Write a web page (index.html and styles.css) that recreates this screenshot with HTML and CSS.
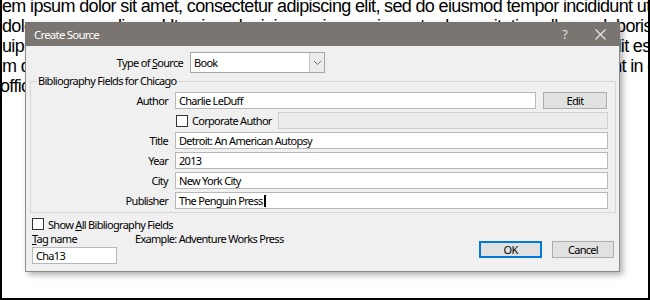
FILE: index.html
```html
<!DOCTYPE html>
<html lang="en">
    <head>
        <meta charset="UTF-8">
        <title>Create Source</title>
        <link rel="stylesheet" href="styles.css">
    </head>
    <body>
        <!-- the document behind the dialog -->
        <div class="doc">
            <div class="docLine">em ipsum dolor sit amet, consectetur adipiscing elit, sed do eiusmod tempor incididunt ut labore</div>
            <div class="docLine">dolore magna aliqua. Ut enim ad minim veniam, quis nostrud exercitation ullamco laboris</div>
            <div class="docLine">uip ex ea commodo consequat. Duis aute irure dolor in reprehenderit in voluptate velit esse</div>
            <div class="docLine">m dolore eu fugiat nulla pariatur. Excepteur sint occaecat cupidatat non proident, sunt in culpa</div>
            <div class="docLine lastLine">officia deserunt mollit anim id est laborum.</div>
        </div>

        <div class="dialog">
            <div class="titleBar">
                <span class="titleText">Create Source</span>
                <span class="titleButtons">
                    <span class="helpBtn">?</span>
                    <svg class="closeBtn" width="11" height="11" viewBox="0 0 11 11">
                        <path d="M0.5 0.5 L10.5 10.5 M10.5 0.5 L0.5 10.5" stroke="#ececec" stroke-width="1.1" fill="none"/>
                    </svg>
                </span>
            </div>
            <div class="dialogBody">
                <div class="typeRow">
                    <label class="typeLabel">Type of <u>S</u>ource</label>
                    <div class="selectBox">
                        <span class="selectValue">Book</span>
                        <span class="dropBtn">
                            <svg width="9" height="6" viewBox="0 0 9 6">
                                <path d="M1 1 L4.5 4.5 L8 1" stroke="#707070" stroke-width="1" fill="none"/>
                            </svg>
                        </span>
                    </div>
                </div>

                <fieldset class="group">
                    <legend>Bibliography Fields for Chicago</legend>
                    <div class="fieldGrid">
                        <span class="fieldLabel">Author</span>
                        <div class="authorCell">
                            <div class="textBox authorBox">Charlie LeDuff</div>
                            <div class="btn editBtn">Edit</div>
                        </div>

                        <span></span>
                        <div class="corpCell">
                            <span class="checkBox"></span>
                            <span class="corpText">Corporate Author</span>
                            <div class="textBox disabledBox"></div>
                        </div>

                        <span class="fieldLabel">Title</span>
                        <div class="textBox">Detroit: An American Autopsy</div>

                        <span class="fieldLabel">Year</span>
                        <div class="textBox">2013</div>

                        <span class="fieldLabel">City</span>
                        <div class="textBox">New York City</div>

                        <span class="fieldLabel">Publisher</span>
                        <div class="textBox">The Penguin Press<span class="caret"></span></div>
                    </div>
                </fieldset>

                <div class="bottomArea">
                    <div class="bottomLeft">
                        <div class="showAllRow">
                            <span class="checkBox"></span>
                            <span>Show <u>A</u>ll Bibliography Fields</span>
                        </div>
                        <div class="tagRow">
                            <span class="tagLabel"><u>T</u>ag name</span>
                            <span>Example: Adventure Works Press</span>
                        </div>
                        <div class="textBox tagBox">Cha13</div>
                    </div>
                    <div class="buttonRow">
                        <div class="btn okBtn">OK</div>
                        <div class="btn cancelBtn">Cancel</div>
                    </div>
                </div>
            </div>
        </div>
    </body>
</html>
```

FILE: styles.css
```css
html, body {
    margin: 0;
}
body {
    width: 650px;
    height: 300px;
    box-sizing: border-box;
    border: 2px solid #000;
    border-top: 0;
    overflow: hidden;
    position: relative;
    background-color: #fff;
}

/* document text behind */
.doc {
    margin-top: -4px;
    font-family: "Liberation Sans", Arial, sans-serif;
    font-size: 18px;
    line-height: 20px;
    letter-spacing: -0.65px;
    color: #000;
}
.docLine {
    white-space: nowrap;
    overflow: hidden;
}
.lastLine {
    margin-left: -2px;
}

/* dialog window */
.dialog {
    position: absolute;
    left: 23px;
    top: 22px;
    width: 595px;
    height: 250px;
    box-sizing: border-box;
    border: 1px solid #8f8b87;
    border-top: 0;
    background-color: #f0f0f0;
    box-shadow: 3px 3px 6px rgba(0, 0, 0, 0.3);
    font-family: "Noto Sans", "Open Sans", sans-serif;
    font-size: 11px;
    letter-spacing: -0.7px;
    color: #000;
}
.titleBar {
    height: 24px;
    margin: 0 -1px;
    background-color: #7a7571;
    display: flex;
    align-items: center;
    justify-content: space-between;
    padding: 0 14px 0 9px;
}
.titleText {
    color: #fff;
    font-size: 11.5px;
    letter-spacing: -0.8px;
}
.titleButtons {
    display: flex;
    align-items: center;
    gap: 28px;
}
.helpBtn {
    color: #e6e6e6;
    font-size: 12px;
}
.closeBtn {
    display: block;
}

.dialogBody {
    display: flex;
    flex-direction: column;
}

.typeRow {
    display: flex;
    align-items: center;
    gap: 7px;
    margin-top: 6px;
    height: 21px;
}
.typeLabel {
    width: 157px;
    text-align: right;
}
.selectBox {
    width: 135px;
    height: 21px;
    box-sizing: border-box;
    border: 1px solid #a6a6a6;
    background-color: #fff;
    display: flex;
    align-items: center;
    justify-content: space-between;
}
.selectValue {
    padding-left: 3px;
}
.dropBtn {
    width: 15px;
    height: 19px;
    box-sizing: border-box;
    border-left: 1px solid #c8c8c8;
    background-color: #ececec;
    display: flex;
    align-items: center;
    justify-content: center;
}

.group {
    margin: 0 3px 0 4px;
    padding: 3px 7px 3px 0;
    border: 1px solid #d6d6d6;
    min-width: 0;
}
.group legend {
    margin-left: 6px;
    padding: 0 1px;
    line-height: 16px;
}
.fieldGrid {
    display: grid;
    grid-template-columns: 137px 433px;
    grid-auto-rows: 17px;
    column-gap: 7px;
    row-gap: 3px;
    align-items: center;
}
.fieldLabel {
    text-align: right;
}
.textBox {
    height: 17px;
    box-sizing: border-box;
    border: 1px solid #b8b8b8;
    background-color: #fff;
    padding-left: 3px;
    line-height: 15px;
    white-space: nowrap;
}
.caret {
    display: inline-block;
    width: 2px;
    height: 12px;
    margin-left: 1px;
    vertical-align: -2px;
    background-color: #000;
}
.authorCell {
    display: flex;
    gap: 7px;
}
.authorBox {
    width: 361px;
}
.btn {
    height: 17px;
    box-sizing: border-box;
    border: 1px solid #adadad;
    background-color: #e1e1e1;
    text-align: center;
    line-height: 15px;
}
.editBtn {
    width: 64px;
}
.corpCell {
    display: flex;
    align-items: center;
}
.checkBox {
    width: 12px;
    height: 12px;
    box-sizing: border-box;
    border: 1px solid #333;
    background-color: #fff;
    flex-shrink: 0;
}
.corpCell .checkBox {
    margin-left: 1px;
}
.corpText {
    margin-left: 4px;
    white-space: nowrap;
}
.disabledBox {
    width: 330px;
    margin-left: auto;
    flex-shrink: 0;
    background-color: #ececec;
    border-color: #cfcfcf;
}

.bottomArea {
    display: flex;
    justify-content: space-between;
    align-items: flex-end;
    padding: 4px 5px 0 6px;
}
.bottomLeft {
    display: flex;
    flex-direction: column;
}
.showAllRow {
    display: flex;
    align-items: center;
    gap: 4px;
    height: 14px;
}
.tagRow {
    display: flex;
    height: 15px;
    align-items: center;
}
.tagLabel {
    width: 103px;
}
.tagBox {
    width: 85px;
    margin-top: 1px;
}
.buttonRow {
    display: flex;
    gap: 10px;
    margin-bottom: 6px;
}
.okBtn {
    width: 63px;
    border: 2px solid #0078d7;
    line-height: 13px;
}
.cancelBtn {
    width: 62px;
}
```
